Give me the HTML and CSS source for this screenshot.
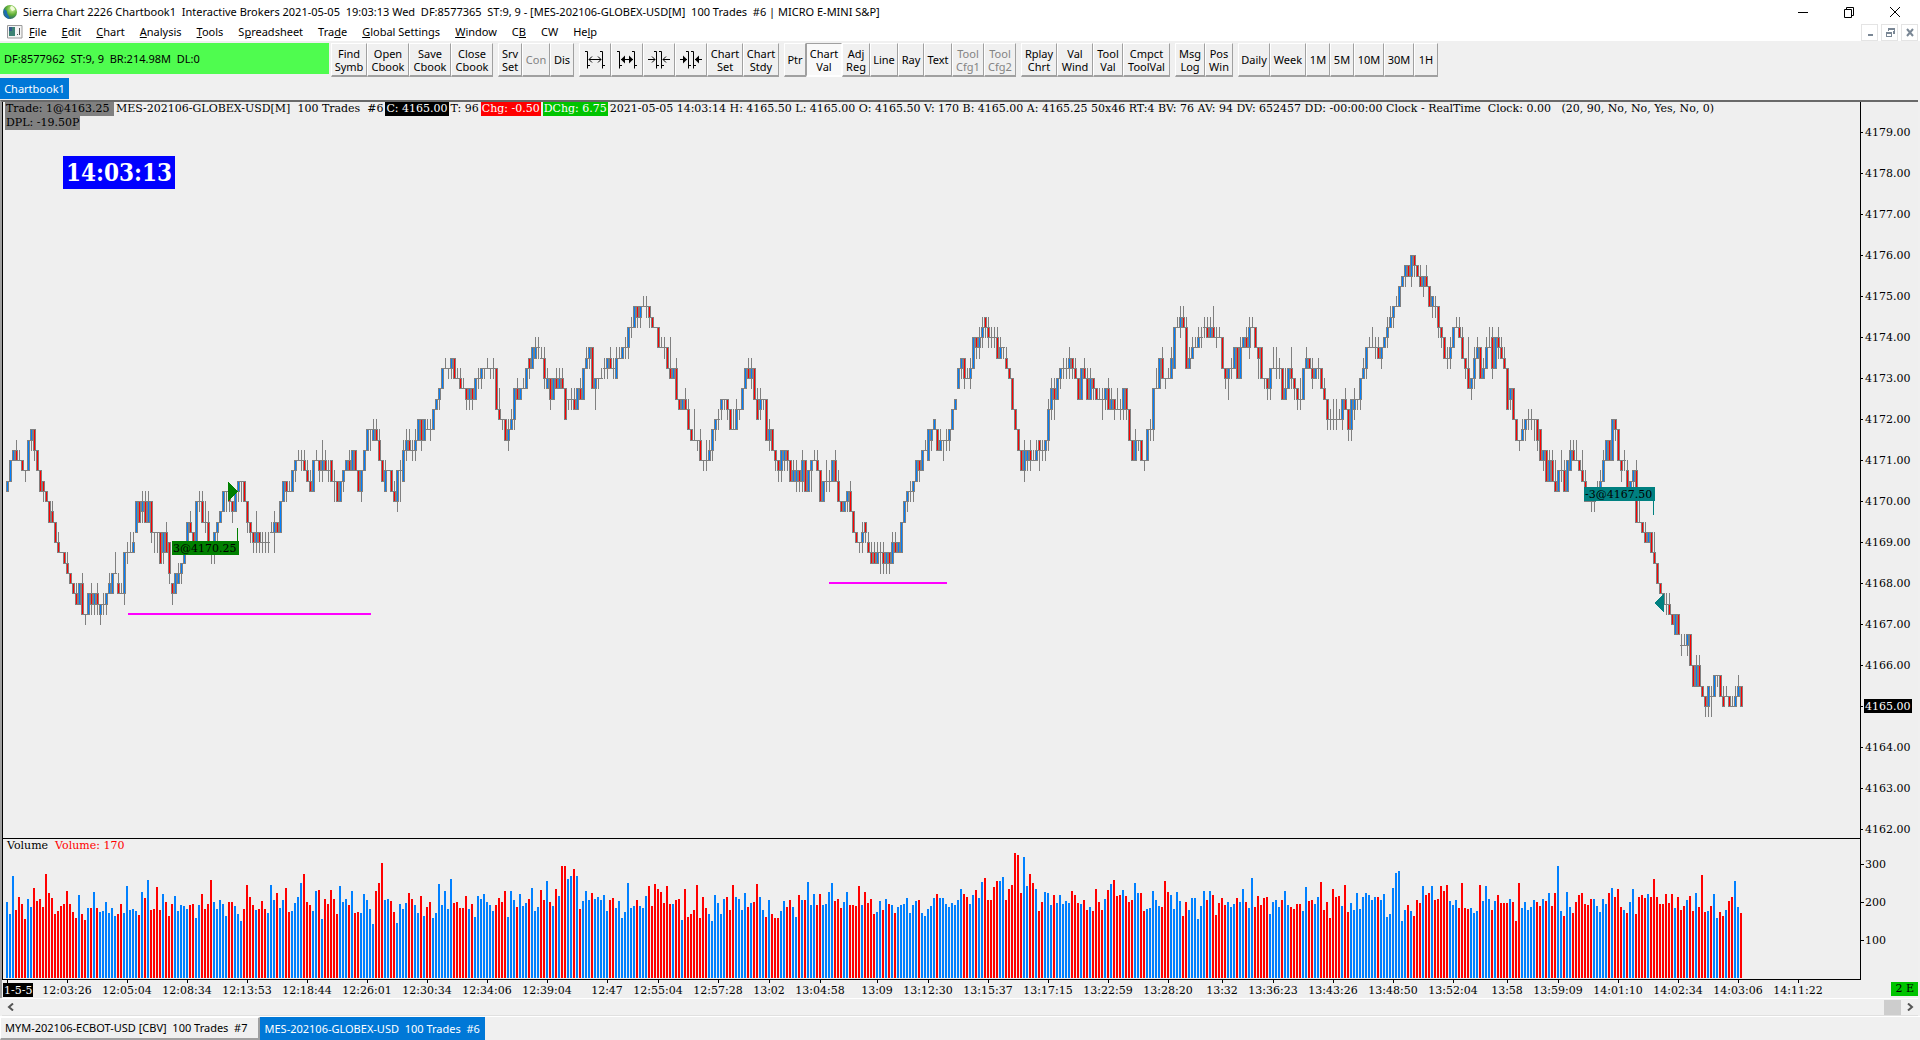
FILE: index.html
```html
<!DOCTYPE html>
<html lang="en">
<head>
    <meta charset="UTF-8">
    <meta name="viewport" content="width=device-width, initial-scale=1.0">
    <title>Sierra Chart</title>
    <link rel="stylesheet" href="styles.css">
</head>
<body>
    <!-- Title bar -->
    <header class="title-bar">
        <svg class="app-icon" width="16" height="16" viewBox="0 0 16 16">
            <defs>
                <radialGradient id="globe" cx="0.65" cy="0.3" r="0.8">
                    <stop offset="0" stop-color="#d6f5a0"/>
                    <stop offset="0.5" stop-color="#5fae35"/>
                    <stop offset="1" stop-color="#14507e"/>
                </radialGradient>
            </defs>
            <circle cx="8" cy="8" r="7" fill="url(#globe)"/>
            <path d="M2 5C1 9 3 13 7 15C8 12 5 11 5 8C5 6 3 6 2 5Z" fill="#1c6cb0"/>
            <path d="M9 2C11 2 13 4 13 6L10 7L8 4Z" fill="#f2fbdc"/>
        </svg>
        <span class="title-text">Sierra Chart 2226 Chartbook1  Interactive Brokers 2021-05-05  19:03:13 Wed  DF:8577365  ST:9, 9 - [MES-202106-GLOBEX-USD[M]  100 Trades  #6 | MICRO E-MINI S&amp;P]</span>
        <div class="window-buttons">
            <button type="button" aria-label="Minimize"><svg width="12" height="12"><path d="M1 6.5H11" stroke="#000"/></svg></button>
            <button type="button" aria-label="Restore"><svg width="12" height="12"><path d="M1.5 3.5H8.5V11.5H1.5ZM3.5 3V1.5H10.500V9.500H9" fill="none" stroke="#000"/></svg></button>
            <button type="button" aria-label="Close"><svg width="12" height="12"><path d="M1 1L11 11M11 1L1 11" stroke="#000"/></svg></button>
        </div>
    </header>

    <!-- Menu -->
    <nav class="menu-bar">
        <svg class="doc-icon" width="16" height="14" viewBox="0 0 16 14">
            <path d="M0.500 0.500H15V13H0.500Z" fill="#f4f4f4" stroke="#9a9a9a"/>
            <path d="M2 2H8V11H2Z" fill="#3c8273"/>
            <path d="M2 2H5V6H2Z" fill="#36588a"/>
            <path d="M10 9H11V10H10ZM12 3H13V10H12Z" fill="#555"/>
        </svg>
        <a href="#"><u>F</u>ile</a>
        <a href="#"><u>E</u>dit</a>
        <a href="#"><u>C</u>hart</a>
        <a href="#"><u>A</u>nalysis</a>
        <a href="#"><u>T</u>ools</a>
        <a href="#">S<u>p</u>readsheet</a>
        <a href="#">Tra<u>d</u>e</a>
        <a href="#"><u>G</u>lobal Settings</a>
        <a href="#"><u>W</u>indow</a>
        <a href="#">C<u>B</u></a>
        <a href="#">CW</a>
        <a href="#">He<u>l</u>p</a>
        <div class="mdi-buttons">
            <button type="button" aria-label="Minimize chart"><svg width="10" height="10"><path d="M3 7H8V9H3Z" fill="#7a8795"/></svg></button>
            <button type="button" aria-label="Restore chart"><svg width="10" height="10"><path d="M1 5H7V10H1ZM3 1H10V7H8V4H3Z" fill="#7a8795"/><path d="M2 7H6V9H2ZM4 3H9V4H4Z" fill="#fff"/></svg></button>
            <button type="button" aria-label="Close chart"><svg width="10" height="10"><path d="M2 2L8 9M8 2L2 9" stroke="#7a8795" stroke-width="2"/></svg></button>
        </div>
    </nav>

    <!-- Toolbar -->
    <div class="toolbar">
        <div class="status">DF:8577962  ST:9, 9  BR:214.98M  DL:0</div>
        <div class="group">
            <button type="button" class="w36">Find<br>Symb</button>
            <button type="button" class="w42">Open<br>Cbook</button>
            <button type="button" class="w42">Save<br>Cbook</button>
            <button type="button" class="w42">Close<br>Cbook</button>
        </div>
        <div class="group">
            <button type="button" class="w24">Srv<br>Set</button>
            <button type="button" class="w28" disabled>Con</button>
            <button type="button" class="w24">Dis</button>
        </div>
        <div class="group">
            <button type="button" class="w32" aria-label="Increase bar spacing"><svg width="20" height="20"><path d="M0 1.500H2.500V18.500M2.500 15.500H5M15 1.500H17.500V18.500M17.500 15.500H20M4 9.500H16M7 6.500L4 9.500L7 12.500M13 6.500L16 9.500L13 12.500" fill="none" stroke="#000"/></svg></button>
            <button type="button" class="w32" aria-label="Increase bar spacing more"><svg width="20" height="20"><path d="M0 1.500H2.500V18.500M2.500 15.500H5M15 1.500H17.500V18.500M17.500 15.500H20M4 9.500H16" fill="none" stroke="#000"/><path d="M4 9.500L8 5.500V13.500ZM16 9.500L12 5.500V13.500Z"/></svg></button>
            <button type="button" class="w32" aria-label="Decrease bar spacing"><svg width="22" height="20"><path d="M6 1.500H8.500V18.500M8.500 15.500H11M11 1.500H13.500V18.500M13.500 15.500H16M0 9.500H7M4 6.500L7 9.500L4 12.500M15 9.500H22M18 6.500L15 9.500L18 12.500" fill="none" stroke="#000"/></svg></button>
            <button type="button" class="w32" aria-label="Decrease bar spacing more"><svg width="22" height="20"><path d="M6 1.500H8.500V18.500M8.500 15.500H11M11 1.500H13.500V18.500M13.500 15.500H16M0 9.500H7M15 9.500H22" fill="none" stroke="#000"/><path d="M7 9.500L3 5.500V13.500ZM15 9.500L19 5.500V13.500Z"/></svg></button>
            <button type="button" class="w36">Chart<br>Set</button>
            <button type="button" class="w36">Chart<br>Stdy</button>
        </div>
        <div class="group">
            <button type="button" class="w22">Ptr</button>
            <button type="button" class="w36 pressed">Chart<br>Val</button>
            <button type="button" class="w28">Adj<br>Reg</button>
            <button type="button" class="w28">Line</button>
            <button type="button" class="w26">Ray</button>
            <button type="button" class="w28">Text</button>
            <button type="button" class="w32" disabled>Tool<br>Cfg1</button>
            <button type="button" class="w32" disabled>Tool<br>Cfg2</button>
        </div>
        <div class="group">
            <button type="button" class="w36">Rplay<br>Chrt</button>
            <button type="button" class="w36">Val<br>Wind</button>
            <button type="button" class="w30">Tool<br>Val</button>
            <button type="button" class="w47">Cmpct<br>ToolVal</button>
        </div>
        <div class="group">
            <button type="button" class="w30">Msg<br>Log</button>
            <button type="button" class="w28">Pos<br>Win</button>
        </div>
        <div class="group">
            <button type="button" class="w32">Daily</button>
            <button type="button" class="w36">Week</button>
            <button type="button" class="w24">1M</button>
            <button type="button" class="w24">5M</button>
            <button type="button" class="w30">10M</button>
            <button type="button" class="w30">30M</button>
            <button type="button" class="w24">1H</button>
        </div>
    </div>

    <div class="chartbook-tabs">
        <button type="button">Chartbook1</button>
    </div>

    <!-- Chart window -->
    <main class="chart">
        <section class="price-pane">
            <svg id="price-plot"></svg>
            <div class="chart-header">
                <span class="tag gray">Trade: 1@4163.25 </span>
                <span>MES-202106-GLOBEX-USD[M]  100 Trades  #6</span>
                <span class="tag black">C: 4165.00</span>
                <span>T: 96</span>
                <span class="tag red">Chg: -0.50</span>
                <span class="tag green">DChg: 6.75</span>
                <span>2021-05-05 14:03:14 H: 4165.50 L: 4165.00 O: 4165.50 V: 170 B: 4165.00 A: 4165.25 50x46 RT:4 BV: 76 AV: 94 DV: 652457 DD: -00:00:00 Clock - RealTime  Clock: 0.00   (20, 90, No, No, Yes, No, 0)</span>
            </div>
            <div class="chart-header second"><span class="tag gray">DPL: -19.50P</span></div>
            <div class="clock">14:03:13</div>
        </section>
        <svg class="axis" id="price-axis"></svg>

        <section class="volume-pane">
            <svg id="volume-plot"></svg>
            <div class="volume-title">Volume  <span>Volume: 170</span></div>
        </section>
        <svg class="axis" id="volume-axis"></svg>

        <svg class="time-axis" id="time-axis"></svg>
        <div class="corner"><span>2 E</span></div>
    </main>

    <div class="scrollbar">
        <button type="button" aria-label="Scroll left"><svg width="8" height="8"><path d="M6 0.500L2 4L6 7.500" fill="none" stroke="#555" stroke-width="2"/></svg></button>
        <div class="thumb"></div>
        <button type="button" aria-label="Scroll right"><svg width="8" height="8"><path d="M2 0.500L6 4L2 7.500" fill="none" stroke="#555" stroke-width="2"/></svg></button>
    </div>

    <footer class="chart-tabs">
        <button type="button">MYM-202106-ECBOT-USD [CBV]  100 Trades  #7</button>
        <button type="button" class="active">MES-202106-GLOBEX-USD  100 Trades  #6</button>
    </footer>

    <script src="script.js"></script>
</body>
</html>
```
FILE: styles.css
```css
* {
    box-sizing: border-box;
}
body {
    margin: 0;
    height: 100vh;
    display: flex;
    flex-direction: column;
    overflow: hidden;
    background-color: #f0f0f0;
    color: #000;
    font-family: "Noto Sans", "Open Sans", sans-serif;
    font-size: 11px;
    line-height: 14px;
}
button {
    margin: 0;
    padding: 0;
    border: 0;
    background: none;
    font: inherit;
    color: inherit;
    display: flex;
    justify-content: center;
    align-items: center;
}
a {
    color: #000;
    text-decoration: none;
    white-space: nowrap;
}
.title-text,
.status,
.chart-header span,
.volume-title,
.chart-tabs button {
    white-space: pre;
}

/* title bar and menu */
.title-bar {
    display: flex;
    align-items: center;
    height: 23px;
    padding-left: 2px;
    background-color: #fff;
}
.title-text {
    margin-left: 5px;
}
.window-buttons {
    display: flex;
    margin-left: auto;
    padding-right: 2px;
}
.window-buttons button {
    width: 46px;
    height: 20px;
}
.menu-bar {
    display: flex;
    align-items: center;
    gap: 15px;
    height: 18px;
    padding-left: 7px;
    background-color: #fff;
}
.doc-icon {
    margin-right: -9px;
}
.mdi-buttons {
    display: flex;
    gap: 3px;
    margin-left: auto;
    padding-right: 2px;
}
.mdi-buttons button {
    width: 17px;
    height: 17px;
    border: 1px solid #e4e4e4;
}

/* toolbar */
.toolbar {
    display: flex;
    gap: 5px;
    height: 36px;
    padding-top: 2px;
}
.status {
    width: 329px;
    height: 31px;
    margin-right: -3px;
    padding-left: 4px;
    line-height: 31px;
    background-color: #4ffc4f;
}
.group {
    display: flex;
}
.group button {
    border: 1px solid #fff;
    border-right-color: #a0a0a0;
    border-bottom: 2px solid #a0a0a0;
    line-height: 13px;
    text-align: center;
}
.group button:disabled {
    color: #838383;
}
.group .pressed {
    background-color: #f9f9f9;
    border-color: #a0a0a0 #fff #fff #a0a0a0;
}
.w22 { width: 22px; }
.w24 { width: 24px; }
.w26 { width: 26px; }
.w28 { width: 28px; }
.w30 { width: 30px; }
.w32 { width: 32px; }
.w36 { width: 36px; }
.w42 { width: 42px; }
.w47 { width: 47px; }

.chartbook-tabs {
    display: flex;
    height: 23px;
    padding-top: 1px;
}
.chartbook-tabs button {
    width: 69px;
    height: 21px;
    background-color: #0078d7;
    color: #fff;
}

/* chart */
.chart {
    flex: 1;
    display: grid;
    grid-template-columns: minmax(0, 1fr) 58px;
    grid-template-rows: minmax(0, 1fr) 141px 18px;
    margin-right: 2px;
    border-top: 2px solid #696969;
    border-left: 2px solid #a0a0a0;
    background-color: #efefef;
    font-family: "DejaVu Serif", serif;
}
.chart svg {
    display: block;
    width: 100%;
    height: 100%;
    font-size: 11px;
}
.price-pane,
.volume-pane {
    position: relative;
    overflow: hidden;
    border-left: 1px solid #000;
    border-bottom: 1px solid #000;
}
.axis {
    border-left: 1px solid #000;
}
.chart-header {
    position: absolute;
    top: 0;
    left: 2px;
    display: flex;
    gap: 2px;
}
.second {
    top: 14px;
}
.tag {
    padding: 0 1px;
}
.gray {
    background-color: #808080;
}
.black {
    background-color: #000;
    color: #fff;
}
.red {
    background-color: #f00;
    color: #fff;
}
.green {
    background-color: #00c400;
    color: #fff;
}
.clock {
    position: absolute;
    top: 54px;
    left: 60px;
    padding: 0 3px;
    background-color: #00f;
    color: #fff;
    font-family: "DejaVu Serif Condensed", "DejaVu Serif", serif;
    font-size: 24px;
    font-weight: bold;
    line-height: 33px;
}
.volume-title {
    position: absolute;
    top: 0;
    left: 4px;
}
.volume-title span {
    color: #f00;
}
.corner {
    display: flex;
    justify-content: flex-end;
    align-items: center;
}
.corner span {
    padding: 0 4px;
    background-color: #00c400;
}

/* bottom */
.scrollbar {
    display: flex;
    align-items: center;
    height: 18px;
    margin: 0 2px;
    border-top: 1px solid #fff;
    border-bottom: 1px solid #e0e0e0;
}
.scrollbar button {
    width: 17px;
    height: 16px;
}
.thumb {
    width: 17px;
    height: 15px;
    margin-left: auto;
    background-color: #cdcdcd;
}
.chart-tabs {
    display: flex;
    height: 24px;
    border-top: 1px solid #fff;
}
.chart-tabs button {
    padding: 0 10px 0 4px;
    border: 1px solid #fff;
    border-right: 2px solid #a0a0a0;
    border-bottom: 2px solid #a0a0a0;
}
.chart-tabs .active {
    padding: 0 5px;
    border: 0;
    background-color: #0078d7;
    color: #fff;
}
```
FILE: script.js
```js
// One token per bar: open,close[,upper wick[,lower wick]] in 0.25 ticks from 4170.00
const bars = [
    '1,2 2,4 4,5 5,4,1 4,4,1 4,3 3,3,0,1 3,6 6,7,0,1 7,5,0,1 5,3 3,1 2,1,0,1 1,0 0,-2 -1,-2,1 -2,-4 -4,-5,1 -5,-5 -5,-6',
    '-6,-7,1 -7,-8 -8,-9 -9,-10,1 -10,-8 -8,-11,1 -11,-11,0,1 -11,-9 -9,-10,1,1 -10,-9,0,1 -9,-10,1,1 -11,-10,0,1 -10,-10,1,1 -10,-9,0,1 -9,-8,1 -9,-7 -7,-7,2 -8,-9,1 -9,-9,1 -9,-5,0,1',
    '-5,-5,1,1 -5,-5,2 -5,-4,1 -3,0 0,-2 -1,0,1,1 0,-2,1 -2,0,1 0,-3,0,1 -3,-3,0,2 -3,-3,0,2 -3,-6 -5,-3,0,1 -3,-5,1 -4,-7,0,1 -8,-9,0,1 -9,-7 -8,-7,1 -7,-6,0,1 -6,-5',
    '-4,-2 -2,-3,1 -3,-4 -4,0 0,0,1,1 0,-2,1 -2,-2,2,1 -2,-4,1 -5,-5,1,1 -4,-3,0,2 -3,-2,0,1 -2,-1 -1,1 1,1,0,2 1,0,0,1 0,-1,0,1 -1,1 1,2,0,1 2,2,0,2 2,0',
    '0,-2,0,1 -2,-3,0,1 -3,-4,0,1 -4,-3,2,1 -3,-4,0,1 -4,-4,1,1 -4,-4,1,1 -4,-4,1,1 -3,-3,1 -3,-2,1,2 -2,-3 -3,0 0,2 2,1,0,1 1,1,1 1,3 3,4,0,1 4,4,1 4,4,1,1 4,3,1',
    '3,2,1 2,1,1 1,4 4,4,1 4,3,0,1 3,4,2,1 4,3,1 3,3,1,1 4,2 2,2,1,2 2,0 0,2 2,3,0,1 3,4 4,3,1 3,5 5,3 3,1 1,3,0,1 3,5',
    '5,7 7,7,0,2 6,7,1 7,6,1 6,4,1 4,2 1,3,1 3,3 3,1 1,0,1 0,3,0,1 3,3,1,3 2,5,1 5,6,1,1 6,5,1 5,5,1,1 5,6,1,1 6,8 8,6,0,1 6,8',
    '7,7,1 7,7,1,1 7,9 9,10 10,11,0,1 11,13 13,13,1 13,13,0,1 13,14,0,1 14,12 12,12,1 12,11,1 11,11,1 11,10,0,1 10,11,0,1 11,10,0,1 10,12 12,12,1,1 12,13,0,1 13,13,0,1',
    '13,13,1 13,13,0,1 13,13,1,1 13,9 9,8,2 8,8,0,1 8,6 6,7,1,1 7,8,1 8,11,0,1 11,10,1 10,11 11,11,1 11,13 14,13,0,1 13,15 14,15,1 15,15,1,1 14,14,1 14,12,1,1',
    '11,12,1 12,10,0,1 10,12 12,11,1 11,12,1 12,11,1 11,8 10,10,0,1 10,10,1,1 10,9,1 9,11 11,10,1 10,13 13,14,1 14,15,0,1 15,11 11,12,0,2 12,12,0,1 12,12,1 13,13,1,1',
    '13,14,0,1 14,13,1 13,13,1,1 12,14,1 14,14,1 14,15 15,15,1,1 15,17,0,1 17,17,1,1 17,19 19,18,0,1 18,19,0,1 19,19,1 19,19,1,1 19,18,0,1 18,17 17,17 17,15 15,15,1 15,15,1,1',
    '15,13 13,12,3 12,13 13,10,1 10,9 9,10 10,9,1 9,7,1 7,6 6,6,3 6,6,0,1 6,4,1 4,4,0,1 4,4,2,1 4,5,1 5,7,0,1 7,8,0,1 8,8,1,1 9,10,0,1 10,10,0,1',
    '10,9,0,1 9,7 7,7,2 7,9,1 9,9,0,1 9,11 11,13 13,12,1 12,13,1,1 13,10 10,8,1 9,10,1,1 10,10,0,1 10,6 6,7,1,1 7,5 5,4,0,1 4,3,0,1 3,5,0,1 4,5,0,1',
    '5,4,0,1 4,2 2,3,1 2,3,1,1 3,2,0,1 2,4,1,1 4,1 1,3 3,4,0,2 4,4,1 4,3,1 3,0 0,2 2,2,2,1 2,2,1,1 2,4 4,2,1 2,0,1 0,-1 -1,0',
    '0,1,0,1 1,-1,1 -1,-3 -3,-4 -4,-4,0,1 -4,-3,1,1 -2,-3,0,1 -4,-5,1 -5,-6,1 -5,-6,1 -6,-5,1 -5,-5,1,2 -5,-6,1,1 -6,-5,0,1 -5,-6,0,1 -6,-4,1 -4,-5,1 -5,-4 -5,-2 -2,0',
    '0,1,0,1 1,1,1,1 1,2,0,1 2,4 4,3,0,1 3,5 5,5,1 4,7 6,7,0,1 7,8 7,5 5,6,1 6,6,0,2 6,6,1,1 6,7,0,1 7,9 9,10 11,13 13,14,0,1 14,12,0,1',
    '12,12,1 12,13,1,1 13,16 16,15,0,1 15,16,1,1 16,17,1,1 18,17,0,1 17,16,1,1 16,16,1,1 16,16,1,1 16,14,1 14,15,1 15,15,0,1 14,13,1 13,12 12,9 9,7 7,5 5,3 3,5,1,1',
    '4,5,0,1 5,4,1,1 4,4,1 4,5,1 6,5,0,2 5,5,1,1 5,6,0,1 6,9,1,1 9,11,1,1 11,10,1,2 10,12 12,13,0,1 13,13,1,1 13,13,1,1 13,14,1,1 14,13,0,1 13,12,1 12,10 10,13 13,12,1',
    '12,10,1 10,12,1 12,11,0,1 11,10 10,10,1 10,10,1,2 10,11,0,1 11,9,1 9,10,1 10,9,0,1 9,9,2 9,9,1,1 9,11,0,1 11,9,0,1 9,6 6,4 4,6,1 6,6,0,1 6,4 4,4,0,1',
    '4,7 7,7,1,1 7,11,0,1 11,11,2 11,14 14,12,1 12,12,0,1 12,12,1 12,14,1 13,17 17,17,1 17,18,1,1 18,17,1 17,13,1 13,14,1 14,15,1 15,15,1 15,16,1 16,16,1,1 17,17,1,1',
    '17,16,1 16,17,1 17,16,2 16,16,1,1 16,16,1 16,13 13,12,0,1 12,13,0,2 13,13,1,1 13,15 15,12 12,15,1 15,16 16,15,1 15,17,1,1 17,17,1 17,15 15,14,0,2 15,12 12,12,0,1',
    '12,11,0,1 11,13,0,1 13,13,2 13,13,2,1 13,13,1,1 13,10 10,11,2 11,13 13,12,2,1 12,11,0,1 11,10,0,1 10,10,2,1 10,13 13,14,1 14,13 13,12,1,1 12,13 13,13,1,1 13,11 11,10,1',
    '10,8,0,1 8,8,1,1 8,8,2,1 8,8,2,1 8,8,1 8,10,0,1 10,9,1 9,7,0,1 7,10,0,1 9,10,1,1 10,10,0,1 10,12,0,1 12,13,1 13,15,0,1 15,15,1 15,15,2 15,15,1,1 15,14,1 14,15,0,1 15,16',
    '16,17,1,1 17,18,1 18,19,0,1 19,19,1 19,21 21,22 22,23,0,1 23,22 22,24,0,1 24,23,0,1 23,22 22,21,1 21,22,0,1 22,21,1 21,19 19,20,0,1 19,19,1,1 19,17,0,1 17,16,0,1 16,14',
    '14,14,1,1 14,15,1,1 15,17 17,17,1 17,16,1 16,14,1 14,13,0,1 13,11,3 11,12,0,1 12,14,1,1 14,15,1 15,12 12,13,1 13,15,1 15,15,2 16,13,1,1 13,16 16,15,1,1 15,14,1 14,13,1',
    '13,9 10,11,0,1 11,8 8,6 6,6,0,1 6,7,1 7,8,0,1 8,8,1,1 8,8,1,1 8,8,0,2 8,6,0,1 7,4 4,5,0,1 5,2 2,4,1 4,2,1 2,1,2 1,3 3,3,2,1 3,1,1',
    '1,4 3,5,1 5,4,1 4,4,2 4,3 3,2,2 2,0,1 0,0,1 0,0,1,1 0,0,1,1 1,1,1 1,2,1 2,4,1 4,6 6,4 4,8 8,7,0,1 7,4 4,3,0,1 4,4,1,1',
    '3,1,1 1,2 2,3,0,1 3,-2,1 -2,-2,2 -2,-3 -3,-4,1 -4,-3 -3,-5 -5,-6,2 -6,-8 -8,-9 -9,-10 -10,-10,1,1 -10,-11,1 -11,-12 -13,-11 -11,-13 -14,-14,1,1 -14,-14,1',
    '-14,-13,0,1 -13,-16 -16,-18 -18,-16,1 -16,-18,1 -18,-19 -19,-20,0,1 -20,-18,0,1 -19,-19,1,2 -19,-17 -17,-17,0,1 -17,-19 -19,-20,1 -19,-19,1 -19,-20 -20,-20,1 -20,-19,1 -19,-18,1 -18,-20'
].join(' ').split(' ');

// Volume bars: b = up, r = down, then the height
const volumes = [
    'b76 b64 b102 r68 r81 r74 r59 b79 b71 r90 r77 r79 r71 r104 r85 r80 r64 r67 r72 r74 r87 r74 r66 r60 b83 r64 r58 b70 r70 b86 r70 b66 b67 b76 b65 b70 b62 r64 r74 b65',
    'b92 b68 b69 b67 r63 b86 r80 b98 r68 r69 r91 r68 b84 r76 r62 r74 b82 b67 b73 b72 b69 r73 r74 b60 b73 r84 r69 r74 r98 b76 b69 b78 b74 b62 r76 r76 b72 b64 b57 r69',
    'r93 r81 r73 b68 r69 r77 r69 b65 b93 b78 r85 b70 b78 r90 r66 b67 b75 b81 b95 r104 r76 r73 b67 b87 r88 b59 r79 r74 r88 r79 r64 b92 b76 b79 r73 b87 r65 r66 b65 b84',
    'b78 b69 b54 r87 r95 r115 b78 b79 r77 r66 b55 b74 b69 b75 r85 r79 b73 b65 r82 b62 r71 r76 b60 b65 b94 b73 b87 b69 b99 r75 r76 r70 r70 r82 b69 r74 b61 b82 b79 b84',
    'b76 b73 b67 r73 r80 r76 r87 b61 b87 b78 r71 b84 b72 b75 r79 b90 b67 b71 r88 r78 b97 r76 b72 r89 b82 r112 r112 b99 b102 r109 b102 r69 b77 b87 b78 r85 b79 b81 b78 b83',
    'b67 r78 r80 b70 b77 b60 b66 b95 b70 b72 r78 b72 b70 b82 r92 r72 r94 r89 r86 r75 r92 r74 b74 r78 r79 b58 r89 r61 r64 r68 r93 r60 r81 r70 b64 b57 b83 b75 b64 b79',
    'r81 r68 r93 b81 b79 b68 b85 r71 b75 r76 r94 b81 b68 r61 b78 r64 r60 r60 b67 b77 r71 r78 b71 b61 r83 b78 r78 b96 b73 b84 r73 r84 b73 b74 b86 b95 r77 r79 r70 b76',
    'b86 r73 r73 r72 r92 b73 r86 r75 r79 r64 b66 b77 r68 b79 r74 b73 r65 b71 b73 b74 b80 b65 b73 b77 r78 b65 b62 b69 b72 b80 r84 b80 b80 b74 b71 b75 b73 b78 b89 r84',
    'r81 b74 b83 r88 b80 b96 r100 r78 r78 r91 r97 b97 b101 r78 r89 r93 r125 r123 r85 b121 b92 r104 r95 b89 r67 r76 b86 b85 b73 r83 b75 b83 b74 b77 b75 r87 r83 r75 b74 r78',
    'r68 b71 r67 r89 r76 r68 b79 r88 b94 r98 r82 r83 b88 r82 r76 r78 b95 b85 r85 r67 b69 b70 b87 b78 b72 r71 r97 r86 b83 b69 b86 b77 r62 r76 b68 b80 b80 b59 b72 b87',
    'r78 b87 r83 r63 r75 r80 r73 b76 b71 b74 r80 b76 b89 r76 b70 b100 r71 r82 r73 r80 r81 b64 b76 b78 b71 r78 b87 b73 r71 r69 r74 r74 b67 b91 r77 r78 b74 b81 r96 r68',
    'r76 r60 r89 r81 r82 b72 r93 r66 b75 b68 b85 b69 b81 b85 b83 b78 b81 r81 b78 b84 b61 b64 b90 b105 b107 b57 b68 r73 b67 r62 r78 r75 b92 r83 r85 b92 r78 r79 r92 r87',
    'r93 b77 b73 b78 r70 r95 r70 r69 b70 b65 b67 r93 b77 b92 b79 r68 b77 r83 r75 r75 r75 b79 r76 r57 r95 b70 b76 b68 b71 b78 r76 r72 b79 r77 b85 r72 r85 b112 b67 r62',
    'b86 b71 r65 r76 r83 r85 r74 r73 r79 b79 b72 b66 b79 b74 r85 b90 r81 r89 r71 b68 r65 b76 b89 r64 r81 r83 r80 b84 r81 r99 r81 r74 r74 r84 r75 r84 b70 r81 r68 r72',
    'b78 r82 r67 b85 r71 r103 r66 b67 r72 b84 b60 r66 r62 b68 r77 r81 b97 b71 r65'
].join(' ').split(' ');

const times = [
    [20, '12:03:26'], [40, '12:05:04'], [60, '12:08:34'], [80, '12:13:53'], [100, '12:18:44'],
    [120, '12:26:01'], [140, '12:30:34'], [160, '12:34:06'], [180, '12:39:04'], [200, '12:47'],
    [217, '12:55:04'], [237, '12:57:28'], [254, '13:02'], [271, '13:04:58'], [290, '13:09'],
    [307, '13:12:30'], [327, '13:15:37'], [347, '13:17:15'], [367, '13:22:59'], [387, '13:28:20'],
    [405, '13:32'], [422, '13:36:23'], [442, '13:43:26'], [462, '13:48:50'], [482, '13:52:04'],
    [500, '13:58'], [517, '13:59:09'], [537, '14:01:10'], [557, '14:02:34'], [577, '14:03:06'],
    [597, '14:11:22']
];

const spacing = 3;
const pointHeight = 41;
const baseY = 399; // y of 4170.00
const colors = { up: '#0080ff', down: '#ff0000', outline: '#808080' };

function barX(i) {
    return 3 + i * spacing;
}

function tickY(tick) {
    return Math.round(baseY - tick * pointHeight / 4);
}

function rect(x, y, w, h) {
    return `M${x} ${y}h${w}v${h}h${-w}z`;
}

function path(d, fill) {
    return `<path d="${d}" fill="${fill}" shape-rendering="crispEdges"/>`;
}

function text(x, y, label, extra = '') {
    return `<text x="${x}" y="${y}" ${extra}>${label}</text>`;
}

function drawPrice() {
    let outline = '', up = '', down = '';
    bars.forEach((bar, i) => {
        const [open, close, above = 0, below = 0] = bar.split(',').map(Number);
        const x = barX(i);
        const top = tickY(Math.max(open, close));
        const bottom = tickY(Math.min(open, close));
        const high = tickY(Math.max(open, close) + above);
        const low = tickY(Math.min(open, close) - below);
        outline += rect(x, top, 3, bottom - top + 1);
        outline += rect(x + 1, high, 1, low - high + 1);
        if (close > open) up += rect(x + 1, top + 1, 1, bottom - top - 1);
        if (close < open) down += rect(x + 1, top + 1, 1, bottom - top - 1);
    });

    let svg = path(outline, colors.outline) + path(up, colors.up) + path(down, colors.down);

    // support lines
    svg += path(rect(125, 511, 243, 2) + rect(826, 480, 118, 2), '#ff00ff');

    // entry and exit
    svg += path('M225 380L235 389L225 399Z' + rect(234, 426, 1, 14) + rect(169, 439, 67, 14), '#008000');
    svg += text(170, 450, '3@4170.25');
    svg += path('M1661 492L1651 501L1661 511Z' + rect(1650, 398, 1, 15) + rect(1581, 385, 71, 14), '#008080');
    svg += text(1582, 396, '-3@4167.50');
    document.getElementById('price-plot').innerHTML = svg;
}

function drawPriceAxis() {
    let ticks = '', labels = '';
    for (let price = 4162; price <= 4179; price++) {
        const y = tickY((price - 4170) * 4);
        ticks += rect(0, y, 2, 1);
        if (price === 4165) {
            labels += path(rect(3, y - 7, 48, 14), '#000');
            labels += text(4, y + 4, price.toFixed(2), 'fill="#fff"');
        } else {
            labels += text(4, y + 4, price.toFixed(2));
        }
    }
    document.getElementById('price-axis').innerHTML = path(ticks, '#000') + labels;
}

function drawVolume() {
    const d = { b: '', r: '' };
    volumes.forEach((bar, i) => {
        const h = Number(bar.slice(1));
        d[bar[0]] += rect(barX(i), 139 - h, 2, h);
    });
    document.getElementById('volume-plot').innerHTML = path(d.b, colors.up) + path(d.r, colors.down);

    let axis = '';
    for (let v = 100; v <= 300; v += 100) {
        const y = 139 - v * 38 / 100;
        axis += path(rect(0, y, 3, 1), '#000') + text(4, y + 4, v);
    }
    document.getElementById('volume-axis').innerHTML = axis;
}

function drawTimes() {
    let svg = path(rect(5, 0, 1, 3) + rect(1, 3, 30, 14), '#000') + text(2, 14, '1-5-5', 'fill="#fff"');
    times.forEach(([i, label]) => {
        const x = barX(i) + 2;
        svg += path(rect(x, 0, 1, 3), '#000') + text(x, 14, label, 'text-anchor="middle"');
    });
    document.getElementById('time-axis').innerHTML = svg;
}

drawPrice();
drawPriceAxis();
drawVolume();
drawTimes();
```
